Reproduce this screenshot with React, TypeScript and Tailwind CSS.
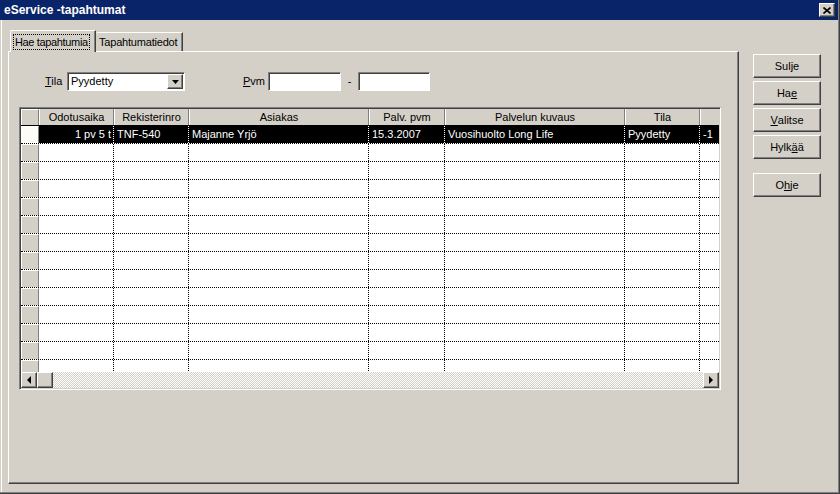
import React from 'react';

const raised =
  'border border-t-white border-l-white border-r-[#404040] border-b-[#404040] shadow-[inset_-1px_-1px_0_#808080]';
const sunken =
  'border p-px border-t-[#808080] border-l-[#808080] border-r-white border-b-white shadow-[inset_1px_1px_0_#404040]';

const columns = [
  { label: 'Odotusaika', w: 'w-[75px]' },
  { label: 'Rekisterinro', w: 'w-[75px]' },
  { label: 'Asiakas', w: 'w-[180px]' },
  { label: 'Palv. pvm', w: 'w-[76px]' },
  { label: 'Palvelun kuvaus', w: 'w-[180px]' },
  { label: 'Tila', w: 'w-[75px]' },
  { label: '', w: 'w-[75px]' },
];

const firstRow = ['1 pv 5 t', 'TNF-540', 'Majanne Yrjö', '15.3.2007', 'Vuosihuolto Long Life', 'Pyydetty', '-1'];

function SideButton({ children, className = '' }: { children: React.ReactNode; className?: string }) {
  return (
    <button className={`${raised} flex h-[24px] w-[68px] items-center justify-center bg-[#d4d0c8] text-black ${className}`}>
      {children}
    </button>
  );
}

function Arrow({ dir }: { dir: 'left' | 'right' | 'down' }) {
  const pts = dir === 'left' ? '4,0 4,8 0,4' : dir === 'right' ? '0,0 0,8 4,4' : '0,0 7,0 3.5,4';
  const w = dir === 'down' ? 7 : 4;
  const h = dir === 'down' ? 4 : 8;
  return (
    <svg width={w} height={h} viewBox={`0 0 ${w} ${h}`}>
      <polygon points={pts} fill="#000" />
    </svg>
  );
}

function Grid() {
  const emptyRows = Array.from({ length: 13 });
  return (
    <div className={`${sunken} ml-[10px] mt-[16px] flex h-[283px] w-[702px] flex-col bg-[#d4d0c8]`}>
      <div className="flex h-[263px] flex-col overflow-hidden bg-white">
        {/* header */}
        <div className="flex h-[17px] shrink-0 border-b border-black bg-[#d4d0c8]">
          <div className="h-full w-[18px] shrink-0 border-r border-l border-t border-l-white border-t-white border-r-[#808080]" />
          {columns.map((c) => (
            <div
              key={c.label || 'x'}
              className={`${c.w} flex h-full shrink-0 items-center justify-center whitespace-nowrap border-r border-l border-l-white border-r-[#808080] leading-none`}
            >
              {c.label}
            </div>
          ))}
        </div>
        {/* selected row */}
        <div className="flex h-[18px] shrink-0 border-b border-dotted border-black">
          <div className="h-full w-[18px] shrink-0 border-r border-t border-l border-t-white border-l-white border-r-[#808080] bg-[#fdfcf6]" />
          {firstRow.map((v, i) => (
            <div
              key={i}
              className={`${columns[i].w} flex h-full shrink-0 items-center overflow-hidden whitespace-nowrap border-r border-dotted border-white bg-black leading-none text-white ${
                i === 0 ? 'justify-end pr-[2px]' : 'pl-[3px]'
              }`}
            >
              {v}
            </div>
          ))}
        </div>
        {emptyRows.map((_, r) => (
          <div key={r} className="flex h-[18px] shrink-0 border-b border-dotted border-black">
            <div className="h-full w-[18px] shrink-0 border-r border-t border-l border-t-white border-l-white border-r-[#808080] bg-[#d4d0c8]" />
            {columns.map((c, i) => (
              <div key={i} className={`${c.w} h-full shrink-0 border-r border-dotted border-black`} />
            ))}
          </div>
        ))}
      </div>
      {/* horizontal scrollbar */}
      <div className="flex h-[16px] shrink-0">
        <div className={`${raised} flex h-[16px] w-[16px] items-center justify-center bg-[#d4d0c8]`}>
          <Arrow dir="left" />
        </div>
        <div className={`${raised} h-[16px] w-[16px] bg-[#d4d0c8]`} />
        <div className="h-full flex-1 bg-[image:repeating-conic-gradient(#ffffff_0_25%,#d4d0c8_0_50%)] bg-[length:2px_2px]" />
        <div className={`${raised} flex h-[16px] w-[16px] items-center justify-center bg-[#d4d0c8]`}>
          <Arrow dir="right" />
        </div>
      </div>
    </div>
  );
}

export default function App() {
  return (
    <div className="flex h-[494px] w-[840px] flex-col border-r border-b border-[#404040] bg-[#d4d0c8] font-['Liberation_Sans',Arial,sans-serif] text-[11px] text-black">
      <div className="flex flex-1 flex-col border-r border-b border-[#808080]">
        {/* title bar */}
        <div className="flex h-[20px] shrink-0 items-center justify-between bg-[#0a246a] pl-[4px] pr-[3px]">
          <span className="text-[12px] font-bold text-white">eService -tapahtumat</span>
          <div className={`${raised} flex h-[14px] w-[16px] items-center justify-center bg-[#d4d0c8]`}>
            <svg width="8" height="7" viewBox="0 0 8 7">
              <path d="M0.5 0.5 L7.5 6.5 M7.5 0.5 L0.5 6.5" stroke="#000" strokeWidth="1.6" />
            </svg>
          </div>
        </div>

        {/* body */}
        <div className="ml-[1px] flex flex-1 border-l border-white pl-[6px]">
          <div className="flex w-[731px] flex-col pt-[10px]">
            {/* tabs */}
            <div className="flex h-[21px] items-end pl-[2px]">
              <div className="relative z-10 -mb-px flex h-[22px] w-[86px] items-center overflow-hidden whitespace-nowrap rounded-tl-[2px] border-l border-t border-r border-l-white border-t-white border-r-[#404040] bg-[#d4d0c8] pl-[2px] shadow-[inset_-1px_0_0_#808080]">
                <span className="border border-dotted border-black px-[1px] py-[1px] leading-[12px] tracking-[-0.35px]">
                  Hae tapahtumia
                </span>
              </div>
              <div className="flex h-[19px] w-[87px] items-center overflow-hidden whitespace-nowrap rounded-tl-[2px] border-t border-r border-t-white border-r-[#404040] pl-[3px] tracking-[-0.2px] shadow-[inset_-1px_0_0_#808080]">
                Tapahtumatiedot
              </div>
            </div>
            {/* panel */}
            <div className="flex h-[433px] flex-col border border-t-white border-l-white border-r-[#404040] border-b-[#404040] shadow-[inset_-1px_-1px_0_#808080]">
              <div className="ml-[36px] mt-[20px] flex h-[19px] items-center">
                <span className="w-[22px]">
                  <u>T</u>ila
                </span>
                <div className={`${sunken} flex h-[19px] w-[118px] items-center bg-white pl-[3px]`}>
                  <span className="flex-1">Pyydetty</span>
                  <div className={`${raised} flex h-[15px] w-[16px] items-center justify-center bg-[#d4d0c8]`}>
                    <Arrow dir="down" />
                  </div>
                </div>
                <span className="ml-[58px] w-[25px]">
                  <u>P</u>vm
                </span>
                <div className={`${sunken} h-[19px] w-[73px] bg-white`} />
                <span className="w-[17px] text-center">-</span>
                <div className={`${sunken} h-[19px] w-[72px] bg-white`} />
              </div>
              <Grid />
            </div>
          </div>

          {/* right buttons */}
          <div className="ml-[14px] flex flex-col gap-[3px] pt-[34px]">
            <SideButton>Sulje</SideButton>
            <SideButton>
              Ha<u>e</u>
            </SideButton>
            <SideButton>
              <u>V</u>alitse
            </SideButton>
            <SideButton>
              Hylk<u>ä</u>ä
            </SideButton>
            <SideButton className="mt-[11px]">
              O<u>h</u>je
            </SideButton>
          </div>
        </div>
      </div>
    </div>
  );
}
